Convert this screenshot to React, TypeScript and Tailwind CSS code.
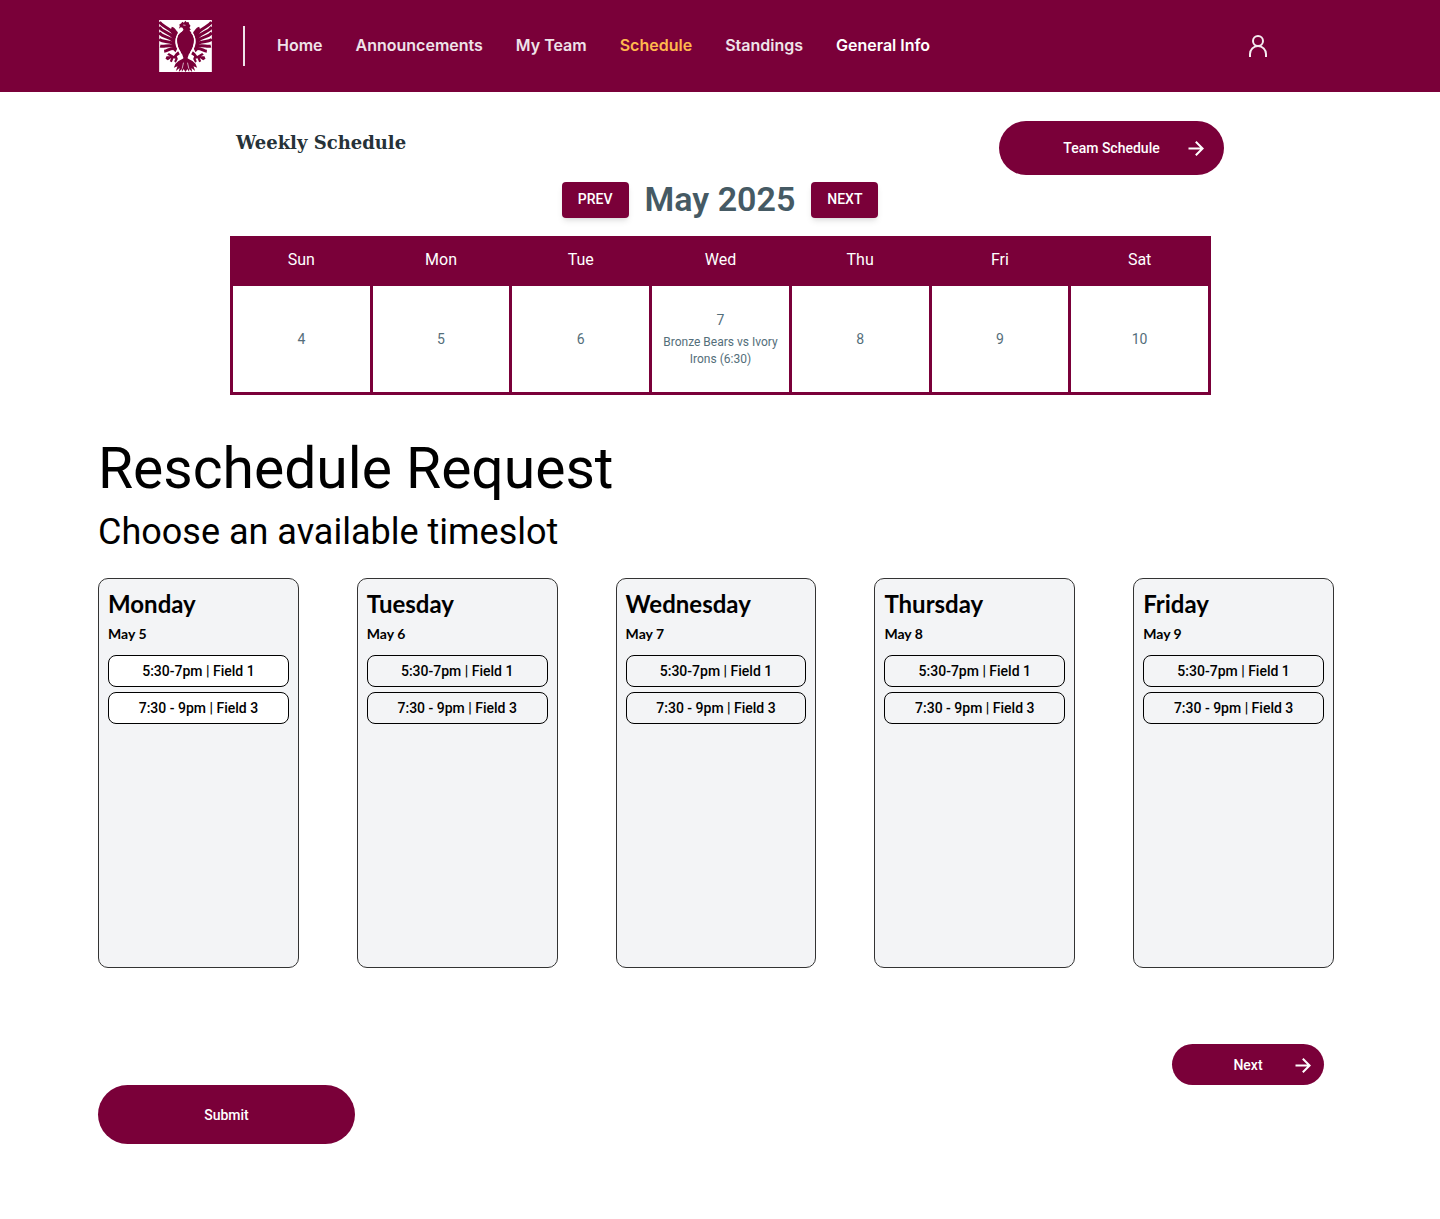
import React from "react";

const NAV = ["Home", "Announcements", "My Team", "Schedule", "Standings", "General Info"];

const WEEK = [
  { name: "Sun", date: 4 },
  { name: "Mon", date: 5 },
  { name: "Tue", date: 6 },
  { name: "Wed", date: 7, game: "Bronze Bears vs Ivory Irons (6:30)" },
  { name: "Thu", date: 8 },
  { name: "Fri", date: 9 },
  { name: "Sat", date: 10 },
];

const DAYS = [
  { name: "Monday", date: "May 5", open: true },
  { name: "Tuesday", date: "May 6", open: false },
  { name: "Wednesday", date: "May 7", open: false },
  { name: "Thursday", date: "May 8", open: false },
  { name: "Friday", date: "May 9", open: false },
];

const SLOTS = ["5:30-7pm | Field 1", "7:30 - 9pm | Field 3"];

function Half() {
  return (
    <g>
      {/* shoulder */}
      <path d="M56 36 C50 32 49 23 38 20 C34 28 34 38 39 44 L40 68 L42 90 L49 97 L54 86 C47 72 46 56 55 44 Z" />
      {/* flight feathers */}
      <g fill="none" stroke="#7a0039" strokeWidth="9">
        <path d="M1 6 C10 20 24 20 42 38" />
        <path d="M0 21 C10 37 28 35 44 53" />
        <path d="M0 38 C10 53 28 48 44 64" />
        <path d="M0 58 C12 68 28 60 44 72" />
        <path d="M3 78 C16 82 28 72 46 80" />
        <path d="M15 94 C26 93 34 82 48 86" />
      </g>
      {/* leg and talons */}
      <path d="M57 94 L62 103 L53 109 L56 117 L50 128 L45 124 L49 116 L43 115 L38 127 L32 124 L36 114 L26 121 L19 116 L22 109 L33 109 L24 104 L29 99 L44 108 L50 100 Z" />
      {/* tail feathers */}
      <path d="M78 112 L68 118 L58 123 L49 131 L44 143 L55 139 L50 153 L61 144 L59 156 L68 147 L68 156 L77 142 Z" />
    </g>
  );
}

function Eagle() {
  return (
    <svg viewBox="0 0 158 156" className="h-[52px] w-[53px] shrink-0" role="img" aria-label="League crest">
      <rect width="158" height="156" fill="#fff" />
      <g fill="#7a0039">
        <Half />
        <g transform="translate(158 0) scale(-1 1)">
          <Half />
        </g>
        <path d="M79 30 C66 36 56 42 54 54 C52 72 59 91 69 103 L74 118 L79 128 L84 118 L89 103 C99 91 106 72 104 54 C102 42 92 36 88 32 Z" />
        <path d="M60 14 L67 9 L69 5 L74 8 L79 2 L82 7 L88 6 L90 12 L94 17 L91 23 L95 29 L91 31 L97 39 L66 39 L73 29 L70 23 L65 22 L59 26 L62 18 Z" />
        <path d="M79 116 L72 132 L73 146 L79 156 L85 146 L86 132 Z" />
      </g>
      <g fill="none" stroke="#fff" strokeWidth="4">
        <path d="M56 42 C48 58 51 80 64 99 M102 42 C110 58 107 80 94 99" />
        <path d="M72 15 L79 16 M73 128 L69 146 M85 128 L89 146" strokeWidth="2" />
      </g>
    </svg>
  );
}

function Arrow() {
  return (
    <svg viewBox="0 0 16 16" className="h-4 w-4" fill="none" stroke="currentColor" strokeWidth="2" aria-hidden="true">
      <path d="M0.5 8.5 H14.5 M7.8 1.7 L14.6 8.5 L7.8 15.3" />
    </svg>
  );
}

export default function App() {
  return (
    <div className="min-h-screen bg-white font-['Roboto',sans-serif] text-black">
      <header className="bg-[#7a0039] px-6">
        <div className="mx-auto flex h-[92px] max-w-[1122px] items-center">
          <Eagle />
          <div className="ml-[31px] h-10 w-0.5 bg-[#efe3e9]" />
          <nav className="ml-8 flex gap-[33px] pb-0.5 font-['Inter',sans-serif] text-base font-semibold">
            {NAV.map((item) => (
              <a
                key={item}
                href="#"
                aria-current={item === "Schedule" ? "page" : undefined}
                className={
                  item === "Schedule" ? "text-[#ffb84d]" : item === "General Info" ? "text-white" : "text-[#efe3e9]"
                }
              >
                {item}
              </a>
            ))}
          </nav>
          <button type="button" aria-label="Account" className="mr-3 ml-auto text-[#f5edf1]">
            <svg viewBox="0 0 22 24" className="h-6 w-[22px]" fill="none" stroke="currentColor" strokeWidth="2" aria-hidden="true">
              <circle cx="11" cy="7" r="5" />
              <path d="M3 23 V20 a8 8 0 0 1 16 0 V23" />
            </svg>
          </button>
        </div>
      </header>

      <main className="pb-[75px]">
        <section className="mx-auto max-w-[1008px] pt-[29px]">
          <div className="flex items-start justify-between pl-5">
            <h2 className="pt-2 font-['DejaVu_Serif',serif] text-lg leading-7 font-bold text-[#263238]">
              Weekly Schedule
            </h2>
            <button
              type="button"
              className="grid h-[54px] w-[225px] grid-cols-[1fr_auto_1fr] items-center rounded-full bg-[#7a0039] px-5 text-sm font-medium text-white"
            >
              <span className="col-start-2">Team Schedule</span>
              <span className="justify-self-end">
                <Arrow />
              </span>
            </button>
          </div>
          <div className="mt-[7px] flex h-9 items-center justify-center gap-4">
            <button type="button" className="h-9 w-[67px] rounded bg-[#7a0039] pb-0.5 text-sm font-medium text-white shadow-md">
              PREV
            </button>
            <h3 className="pb-0.5 text-[34px] leading-9 font-semibold text-[#455a64]">May 2025</h3>
            <button type="button" className="h-9 w-[67px] rounded bg-[#7a0039] pb-0.5 text-sm font-medium text-white shadow-md">
              NEXT
            </button>
          </div>
          <div className="mt-[18px] pr-[13px] pl-[14px]">
            <table className="w-full table-fixed border-collapse text-center">
              <thead className="bg-[#7a0039] text-base text-white">
                <tr>
                  {WEEK.map((d) => (
                    <th key={d.name} scope="col" className="h-[47px] border-3 border-[#7a0039] pb-0.5 font-normal">
                      {d.name}
                    </th>
                  ))}
                </tr>
              </thead>
              <tbody className="text-sm text-[#546e7a]">
                <tr>
                  {WEEK.map((d) => (
                    <td key={d.name} className="h-[109px] border-3 border-[#7a0039] px-2">
                      {d.date}
                      {d.game && <p className="mt-1 text-xs leading-[17px]">{d.game}</p>}
                    </td>
                  ))}
                </tr>
              </tbody>
            </table>
          </div>
        </section>

        <section className="mt-[42px] pr-[106px] pl-[98px]">
          <h1 className="text-[57px] leading-[64px]">Reschedule Request</h1>
          <p className="mt-[9px] text-4xl leading-[44px]">Choose an available timeslot</p>
          <div className="mt-6 grid grid-cols-5 gap-[58px]">
            {DAYS.map((d) => (
              <article key={d.name} className="min-h-[390px] rounded-[10px] border border-[#333] bg-[#f3f4f6] p-[9px]">
                <h2 className="font-['Lato',sans-serif] text-2xl leading-8 font-bold">{d.name}</h2>
                <p className="mt-1 font-['Lato',sans-serif] text-sm leading-5 font-bold">{d.date}</p>
                <div className="mt-[11px] flex flex-col gap-[5px]">
                  {SLOTS.map((s) => (
                    <button
                      key={s}
                      type="button"
                      className={
                        d.open
                          ? "h-8 rounded-lg border border-black bg-white text-sm font-medium"
                          : "h-8 rounded-lg border border-black text-sm font-medium"
                      }
                    >
                      {s}
                    </button>
                  ))}
                </div>
              </article>
            ))}
          </div>
          <div className="mt-[76px] flex justify-end pr-2.5">
            <button
              type="button"
              className="grid h-[41px] w-[152px] grid-cols-[1fr_auto_1fr] items-center rounded-full bg-[#7a0039] px-[13px] text-sm font-medium text-white"
            >
              <span className="col-start-2">Next</span>
              <span className="justify-self-end">
                <Arrow />
              </span>
            </button>
          </div>
          <button type="button" className="h-[59px] w-[257px] rounded-full bg-[#7a0039] text-sm font-medium text-white">
            Submit
          </button>
        </section>
      </main>
    </div>
  );
}
